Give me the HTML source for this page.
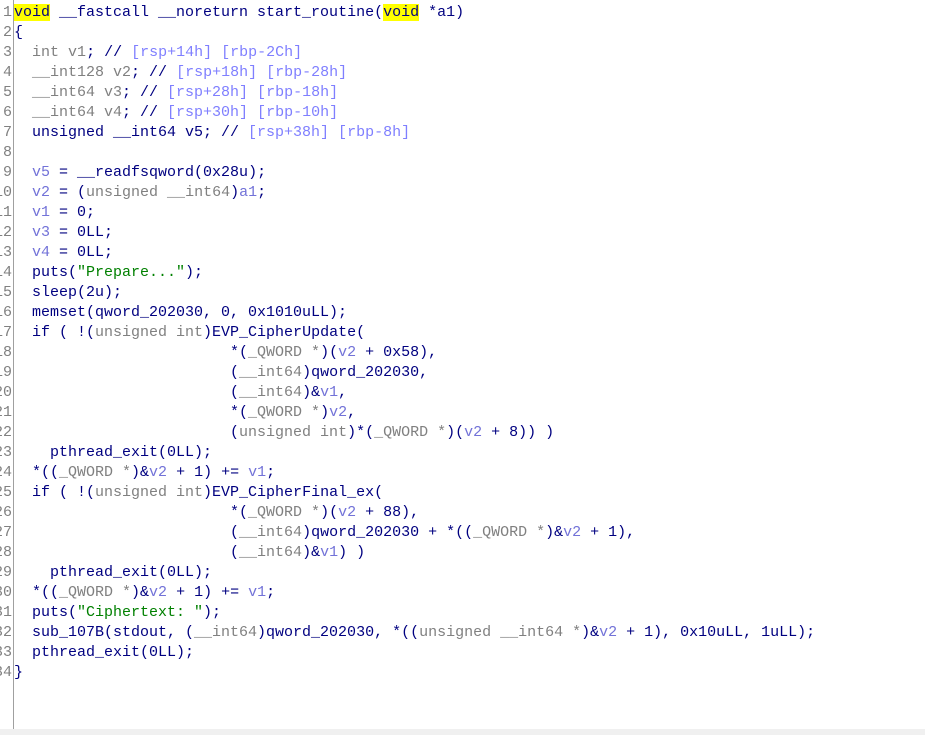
<!DOCTYPE html>
<html><head><meta charset="utf-8"><style>
html,body{margin:0;padding:0;background:#fff;width:925px;height:735px;overflow:hidden}
.gut{position:absolute;left:0;top:0;width:13px;height:729px;border-right:1px solid #a0a0a0;overflow:hidden}
.num{position:absolute;right:1px;font:15px/20px "Liberation Mono",monospace;color:#808080;white-space:pre;text-align:right}
.code{position:absolute;left:14px;top:3px;font:15px/20px "Liberation Mono",monospace;color:#000080;white-space:pre;letter-spacing:0}
.g{color:#808080}.v{color:#7272d8}.s{color:#008000}.c{color:#7f7fff}.h{background:#ffff00}
.bot{position:absolute;left:0;top:729px;width:925px;height:6px;background:#f0f0f0}
</style></head><body>
<div class="gut"><div class="num" style="top:3px">1
2
3
4
5
6
7
8
9
10
11
12
13
14
15
16
17
18
19
20
21
22
23
24
25
26
27
28
29
30
31
32
33
34</div></div>
<div class="code"><span class="h">void</span> __fastcall __noreturn start_routine(<span class="h">void</span> *a1)
{
  <span class="g">int</span> <span class="g">v1</span>; // <span class="c">[rsp+14h] [rbp-2Ch]</span>
  <span class="g">__int128 v2</span>; // <span class="c">[rsp+18h] [rbp-28h]</span>
  <span class="g">__int64 v3</span>; // <span class="c">[rsp+28h] [rbp-18h]</span>
  <span class="g">__int64 v4</span>; // <span class="c">[rsp+30h] [rbp-10h]</span>
  unsigned __int64 v5; // <span class="c">[rsp+38h] [rbp-8h]</span>

  <span class="v">v5</span> = __readfsqword(0x28u);
  <span class="v">v2</span> = (<span class="g">unsigned __int64</span>)<span class="v">a1</span>;
  <span class="v">v1</span> = 0;
  <span class="v">v3</span> = 0LL;
  <span class="v">v4</span> = 0LL;
  puts(<span class="s">"Prepare..."</span>);
  sleep(2u);
  memset(qword_202030, 0, 0x1010uLL);
  if ( !(<span class="g">unsigned int</span>)EVP_CipherUpdate(
                        *(<span class="g">_QWORD *</span>)(<span class="v">v2</span> + 0x58),
                        (<span class="g">__int64</span>)qword_202030,
                        (<span class="g">__int64</span>)&amp;<span class="v">v1</span>,
                        *(<span class="g">_QWORD *</span>)<span class="v">v2</span>,
                        (<span class="g">unsigned int</span>)*(<span class="g">_QWORD *</span>)(<span class="v">v2</span> + 8)) )
    pthread_exit(0LL);
  *((<span class="g">_QWORD *</span>)&amp;<span class="v">v2</span> + 1) += <span class="v">v1</span>;
  if ( !(<span class="g">unsigned int</span>)EVP_CipherFinal_ex(
                        *(<span class="g">_QWORD *</span>)(<span class="v">v2</span> + 88),
                        (<span class="g">__int64</span>)qword_202030 + *((<span class="g">_QWORD *</span>)&amp;<span class="v">v2</span> + 1),
                        (<span class="g">__int64</span>)&amp;<span class="v">v1</span>) )
    pthread_exit(0LL);
  *((<span class="g">_QWORD *</span>)&amp;<span class="v">v2</span> + 1) += <span class="v">v1</span>;
  puts(<span class="s">"Ciphertext: "</span>);
  sub_107B(stdout, (<span class="g">__int64</span>)qword_202030, *((<span class="g">unsigned __int64 *</span>)&amp;<span class="v">v2</span> + 1), 0x10uLL, 1uLL);
  pthread_exit(0LL);
}</div>
<div class="bot"></div>
</body></html>
